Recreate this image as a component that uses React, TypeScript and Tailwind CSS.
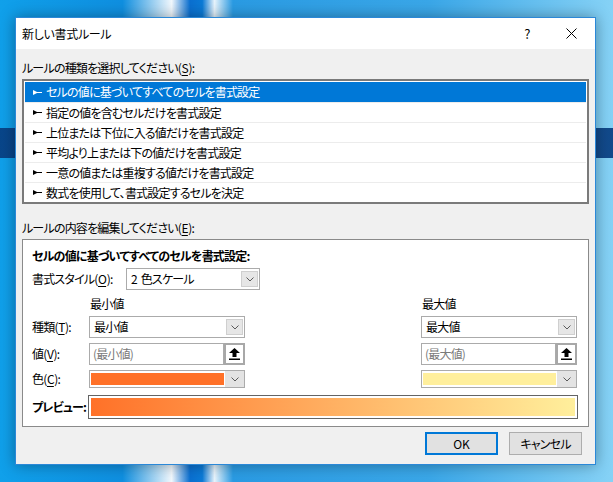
const RULES = [
  "セルの値に基づいてすべてのセルを書式設定",
  "指定の値を含むセルだけを書式設定",
  "上位または下位に入る値だけを書式設定",
  "平均より上または下の値だけを書式設定",
  "一意の値または重複する値だけを書式設定",
  "数式を使用して、書式設定するセルを決定",
];

function Pointer({ light }: { light: boolean }) {
  return (
    <svg width="9" height="5" viewBox="0 0 9 5" className={light ? "fill-white" : "fill-black"}>
      <polygon points="0,0 4,2 9,2 9,3 4,3 0,5" />
    </svg>
  );
}

function Chevron() {
  return (
    <svg width="8" height="5" viewBox="0 0 8 5" fill="none" stroke="#5a5a5a" strokeWidth="1">
      <polyline points="0.5,0.5 4,4 7.5,0.5" />
    </svg>
  );
}

function DropBtn() {
  return (
    <div className="my-[2px] mr-[1px] flex h-[calc(100%-4px)] w-[17px] items-center justify-center border border-[#cfcfcf] bg-[#e6e6e6]">
      <Chevron />
    </div>
  );
}

function Combo({ text, w }: { text: string; w: string }) {
  return (
    <div className={`flex h-[22px] items-center border border-[#ababab] bg-white ${w}`}>
      <span className="flex-1 whitespace-pre pl-[4px] leading-none text-black">{text}</span>
      <DropBtn />
    </div>
  );
}

function RefInput({ text }: { text: string }) {
  return (
    <div className="flex h-[22px] w-[156px]">
      <div className="flex flex-1 items-center border border-[#ababab] bg-white pl-[3px] text-[#7a7a7a]">
        {text}
      </div>
      <div className="flex w-[21px] items-center justify-center border-2 border-[#a8a8a8] bg-white">
        <svg width="11" height="12" viewBox="0 0 11 12">
          <polygon points="5.5,0 11,5 7.5,5 7.5,9 3.5,9 3.5,5 0,5" fill="#000" />
          <rect x="0" y="10.5" width="11" height="1.5" fill="#000" />
        </svg>
      </div>
    </div>
  );
}

function ColorCombo({ color }: { color: string }) {
  return (
    <div className="flex h-[18px] w-[156px] items-center border border-[#ababab] bg-white">
      <div className="ml-[1px] h-[12px] flex-1" style={{ background: color }} />
      <div className="ml-[1px] flex h-full w-[19px] items-center justify-center bg-[#e3e3e3]">
        <Chevron />
      </div>
    </div>
  );
}

function U({ c }: { c: string }) {
  return <span className="mx-[0.5px] underline underline-offset-2">{c}</span>;
}

export default function App() {
  return (
    <div className="h-[482px] w-[613px] overflow-hidden bg-[linear-gradient(180deg,transparent_128px,rgba(8,62,130,0.92)_128px,rgba(8,62,130,0.92)_158px,transparent_158px),linear-gradient(90deg,#10a0ea_0%,#0f8fe0_20%,#f2f8fd_28%,#0a6fd0_31%,#0b7ad6_33%,#e8f4fc_35%,#2a9be3_38%,#3aa7e8_70%,#86d2f6_100%)] pt-[17px] pl-[15px] font-['Noto_Sans_CJK_JP',sans-serif] text-[12px] tracking-[-0.8px] text-black [font-feature-settings:'palt']">
      <div className="flex h-[448px] w-[581px] flex-col border border-[#2b88d8] bg-[#f0f0f0] shadow-[0_0_14px_rgba(0,0,0,0.35)]">
        <div className="flex h-[31px] shrink-0 items-center bg-white pl-[6px]">
          <span className="tracking-[-0.3px]">新しい書式ルール</span>
          <div className="ml-auto flex w-[44px] justify-center text-[13px]">?</div>
          <div className="mr-[2px] flex w-[44px] justify-center">
            <svg width="11" height="11" viewBox="0 0 11 11" stroke="#000" strokeWidth="1">
              <line x1="0.5" y1="0.5" x2="10.5" y2="10.5" />
              <line x1="10.5" y1="0.5" x2="0.5" y2="10.5" />
            </svg>
          </div>
        </div>

        <div className="flex flex-col px-[6px]">
          <div className="mt-[11px] h-[16px] leading-[16px]">
            ルールの種類を選択してください(<U c="S" />):
          </div>
          <div className="mt-[3px] h-[125px] w-[567px] border-2 border-[#7a7a7a] bg-white p-[1px]">
            {RULES.map((r, i) => (
              <div
                key={r}
                className={`flex h-[20px] items-center gap-[4px] pl-[8px] ${
                  i === 0 ? "bg-[#0078d7] text-white" : "border-t border-[#ececec]"
                }`}
              >
                <Pointer light={i === 0} />
                <span className="leading-none">{r}</span>
              </div>
            ))}
          </div>

          <div className="mt-[16px] h-[16px] leading-[16px]">
            ルールの内容を編集してください(<U c="E" />):
          </div>
          <div className="mt-[3px] flex h-[188px] w-[567px] flex-col border border-[#8a8a8a] bg-white pt-[8px] pl-[9px]">
            <div className="h-[16px] font-bold leading-[16px]">
              セルの値に基づいてすべてのセルを書式設定:
            </div>
            <div className="mt-[4px] flex items-center">
              <div className="w-[94px] whitespace-nowrap">
                書式スタイル(<U c="O" />):
              </div>
              <Combo text="2  色スケール" w="w-[134px]" />
            </div>

            <div className="mt-[6px] flex h-[16px] items-center leading-[16px]">
              <div className="ml-[58px] w-[332px]">最小値</div>
              <div>最大値</div>
            </div>

            <div className="mt-[4px] flex items-center">
              <div className="w-[57px] whitespace-nowrap">
                種類(<U c="T" />):
              </div>
              <Combo text="最小値" w="w-[156px]" />
              <div className="ml-[176px]">
                <Combo text="最大値" w="w-[156px]" />
              </div>
            </div>

            <div className="mt-[5px] flex items-center">
              <div className="w-[57px] whitespace-nowrap">
                値(<U c="V" />):
              </div>
              <RefInput text="(最小値)" />
              <div className="ml-[176px]">
                <RefInput text="(最大値)" />
              </div>
            </div>

            <div className="mt-[5px] flex items-center">
              <div className="w-[57px] whitespace-nowrap">
                色(<U c="C" />):
              </div>
              <ColorCombo color="#ff7128" />
              <div className="ml-[176px]">
                <ColorCombo color="#ffef9c" />
              </div>
            </div>

            <div className="mt-[7px] flex items-center">
              <div className="w-[56px] shrink-0 whitespace-nowrap font-bold">プレビュー:</div>
              <div className="h-[24px] w-[490px] shrink-0 border border-[#646464] bg-white p-[2px]">
                <div className="h-full w-full bg-[linear-gradient(90deg,#ff7128,#ffef9c)]" />
              </div>
            </div>
          </div>

          <div className="mt-[5px] flex justify-end gap-[11px] pr-[7px]">
            <button className="h-[23px] w-[73px] border-2 border-[#0078d7] bg-[#e1e1e1] tracking-normal">OK</button>
            <button className="h-[23px] w-[73px] border border-[#adadad] bg-[#e1e1e1]">キャンセル</button>
          </div>
        </div>
      </div>
    </div>
  );
}
